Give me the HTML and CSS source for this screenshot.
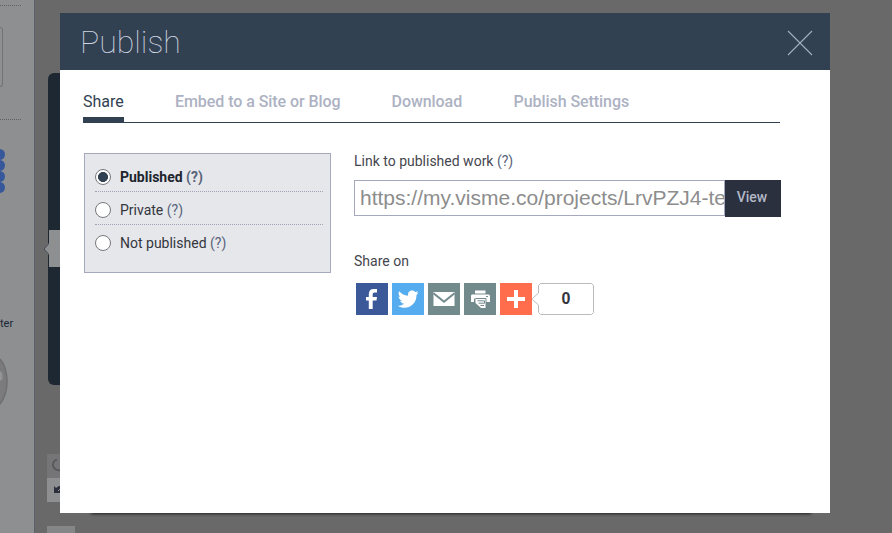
FILE: index.html
```html
<!DOCTYPE html>
<html lang="en">
<head>
<meta charset="utf-8">
<title>Publish</title>
<link rel="stylesheet" href="styles.css">
</head>
<body>
<div class="editor">
  <aside class="sidebar">
    <div class="side-rule"></div>
    <div class="side-card"></div>
    <div class="side-rule"></div>
    <div class="dots"><i></i><i></i><i></i><i></i></div>
    <span class="side-label">ter</span>
    <svg class="knob" width="10" height="50" viewBox="0 0 10 50"><path d="M0 2Q7 10 7 25Q7 38 0 47Z" fill="#7b7b7e"/><path d="M0 14Q3 15 2.500 22L0 24Z" fill="#939497"/><path d="M0 2Q7 10 7 25Q7 38 0 47" fill="none" stroke="#6f6f73" stroke-width="1.500"/></svg>
  </aside>
  <main class="canvas">
    <div class="slide"></div>
    <div class="handle"></div>
    <svg class="arrow" width="6" height="12" viewBox="0 0 6 12"><path d="M6 0L1 6L6 12Z" fill="#8e8f91"/><path d="M6 .5L1 6L6 11.500" fill="none" stroke="#454b56"/></svg>
    <div class="tools">
      <div class="tool dim"><svg width="13" height="24" viewBox="0 0 13 24"><path d="M10 5.500A5.300 5.300 0 0 0 13 16" fill="none" stroke="#56575c" stroke-width="1.800"/></svg></div>
      <div class="tool"><svg width="13" height="24" viewBox="0 0 13 24"><path d="M7 8L9 10L12 8H13V15H7Z" fill="#2b303c"/><path d="M11 13L13 11" stroke="#8e8f91"/></svg></div>
    </div>
    <div class="bottom-tool"></div>
    <div class="shade"></div>
  </main>
</div>

<section class="modal">
  <header class="head">
    <h1>Publish</h1>
    <svg class="close" width="26" height="26" viewBox="0 0 26 26"><path d="M1 1L25 25M25 1L1 25" stroke="#a3adc3" stroke-width="1.100"/></svg>
  </header>
  <nav class="tabs">
    <a class="tab active">Share</a>
    <a class="tab embed">Embed to a Site or Blog</a>
    <a class="tab download">Download</a>
    <a class="tab">Publish Settings</a>
  </nav>
  <div class="content">
    <div class="status">
      <label class="option chosen"><span class="radio on"></span><span>Published <em>(?)</em></span></label>
      <label class="option"><span class="radio"></span><span>Private <em>(?)</em></span></label>
      <label class="option"><span class="radio"></span><span>Not published <em>(?)</em></span></label>
    </div>
    <div class="share">
      <div class="caption">Link to published work <em>(?)</em></div>
      <div class="link">
        <div class="url">https://my.visme.co/projects/LrvPZJ4-te</div>
        <div class="view">View</div>
      </div>
      <div class="caption">Share on</div>
      <div class="icons">
        <svg class="fb" viewBox="0 0 32 32"><path d="M12.800 26V17.500H10V14H12.800V11.500C12.800 7.800 14.600 6 17.500 6H21V9.500H18.700C17.200 9.500 16.700 10.200 16.700 11.500V14H21L20.500 17.500H16.700V26Z" fill="#fff"/></svg>
        <svg class="tw" viewBox="0 0 32 32"><path d="M26.500 9.600C25.700 10 24.900 10.200 24 10.300C24.900 9.800 25.600 8.900 25.900 7.900C25 8.400 24.100 8.800 23.200 9C20.400 6 15.300 8.100 16.100 12.700C12.500 12.500 9.400 10.900 7.200 8.200C6 10.300 6.700 12.600 8.500 13.900C7.800 13.800 7.200 13.600 6.600 13.300C6.600 15.500 8 17.200 10.100 17.700C9.500 17.900 8.900 17.900 8.200 17.800C8.800 19.500 10.400 20.600 12.100 20.700C10.300 22.100 8.100 22.900 5.700 22.700C14.200 28 24.500 22.200 24.500 12.400V11.900C25.300 11.300 26 10.500 26.500 9.600Z" fill="#fff"/></svg>
        <svg class="gray" viewBox="0 0 32 32"><rect x="5.500" y="9" width="21" height="14" fill="#fff"/><path d="M5.500 10.200L16 18.700L26.500 10.200" fill="none" stroke="#738a8d" stroke-width="2"/></svg>
        <svg class="gray" viewBox="0 0 32 32"><path d="M11 7.500H21.500V10.500H11ZM8 11.500H24.500Q26 11.500 26 13V19H22.500V15.500H10V19H7V13Q7 11.500 8 11.500Z" fill="#fff"/><path d="M11.500 15H21.500V25H17L11.500 20Z" fill="#fff"/><path d="M11.500 15.500H22M13.500 17.800H20.500V20.200H14.500M16.500 22.500H20" fill="none" stroke="#738a8d"/><path d="M22 13.500H24" stroke="#738a8d"/></svg>
        <svg class="plus" viewBox="0 0 32 32"><path d="M14 7H18V14H25V18H18V25H14V18H7V14H14Z" fill="#fff"/></svg>
        <div class="count"><svg width="63" height="32" viewBox="0 0 63 32"><path d="M9.500 .5H60.500L62.500 2.500V29.500L60.500 31.500H9.500L7.500 29.500V22L1.500 16.500V15.500L7.500 10V2.500Z" fill="#fff" stroke="#bbb"/></svg><span>0</span></div>
      </div>
    </div>
  </div>
</section>
</body>
</html>
```
FILE: styles.css
```css
* { box-sizing: border-box; }
body { margin: 0; width: 892px; height: 533px; overflow: hidden; background: #696969; font-family: Roboto, sans-serif; }
em { font-style: normal; color: #58647a; }
.editor { display: flex; height: 533px; }
.sidebar { width: 35px; background: #8e8f91; border-right: 1px solid #5c606a; padding-top: 5px; overflow: hidden; }
.side-rule { width: 21px; border-top: 1px dotted #606166; }
.side-card { width: 3px; height: 60px; margin: 21px 0 32px; border: 1px solid #737478; border-left: 0; border-radius: 0 4px 4px 0; }
.dots { margin-top: 29px; display: flex; flex-direction: column; }
.dots i { width: 11px; height: 11px; margin: 0 0 0 -6px; border-radius: 50%; background: #36589b; box-shadow: -2px 0 #36589b; }
.side-label { display: block; margin-top: 124px; font-size: 11px; line-height: 14px; color: #192737; }
.knob { display: block; margin-top: 26px; }
.canvas { position: relative; flex: 1; }
.slide { position: absolute; left: 13px; top: 73px; width: 760px; height: 312px; border-radius: 6px; background: #1e2832; }
.handle { position: absolute; left: 14px; top: 230px; width: 15px; height: 37px; background: #8e8f91; }
.arrow { position: absolute; left: 8px; top: 243px; }
.tools { position: absolute; left: 12px; top: 454px; width: 13px; }
.tool { height: 24px; background: #8e8f91; }
.tool.dim { background: #757577; }
.tool svg { display: block; }
.bottom-tool { position: absolute; left: 12px; top: 526px; width: 28px; height: 7px; background: #858688; }
.shade { position: absolute; left: 56px; top: 490px; width: 720px; height: 23px; box-shadow: 0 1px 3px #202422; }
.modal { position: absolute; left: 60px; top: 13px; width: 770px; height: 500px; background: #fff; }
.head { display: flex; justify-content: space-between; height: 57px; padding: 17px 17px 0 20px; background: #324151; }
h1 { margin: -6px 0 0; font-size: 32px; line-height: 36px; font-weight: 100; color: #d0d6e3; }
.close { display: block; }
.tabs { display: flex; width: 697px; height: 53px; margin-left: 23px; border-bottom: 1px solid #324151; }
.tab { height: 53px; padding-top: 22px; font-size: 16px; line-height: 20px; font-weight: 500; letter-spacing: -.06px; color: #adb2c3; white-space: nowrap; }
.tab.active { width: 41px; margin-right: 51px; font-weight: 400; letter-spacing: 0; color: #324151; border-bottom: 6px solid #324151; }
.embed { width: 166px; margin-right: 50.5px; }
.download { width: 71px; margin-right: 51px; }
.content { display: flex; padding: 30px 0 0 24px; }
.status { width: 247px; height: 120px; padding: 7px 7px 0 10px; border: 1px solid #a5a9be; background: #e6e7eb; }
.option { display: flex; align-items: center; height: 33px; padding-top: 2px; font-size: 14px; color: #33363d; }
.option:first-child { height: 31px; }
.option:not(:last-child) { border-bottom: 1px dotted #a0a3b6; }
.option:nth-child(2) { padding-top: 4px; }
.chosen { font-weight: 700; color: #20242d; }
.radio { width: 16px; height: 16px; margin-right: 9px; border: 1px solid #77787c; border-radius: 50%; background: #fff; }
.radio.on { background: radial-gradient(circle, #324151 4.700px, #fff 5.300px); }
.share { margin-left: 23px; width: 427px; }
.caption { font-size: 14px; line-height: 16px; color: #44464e; }
.link { display: flex; height: 37px; margin: 11px 0 36px; }
.url { width: 371px; height: 36px; padding-left: 5px; border: 1px solid #a5a9be; overflow: hidden; white-space: nowrap; font: 21px/34px "Liberation Sans", sans-serif; color: #8d8d8d; }
.view { width: 56px; height: 37px; padding-right: 2px; background: #2a303e; color: #b3b8c7; font-size: 14px; line-height: 35px; font-weight: 500; text-align: center; }
.icons { display: flex; gap: 4px; margin: 14px 0 0 2px; height: 32px; }
.icons > svg { width: 32px; height: 32px; }
.fb { background: #3b5998; }
.tw { background: #55acee; }
.gray { background: #738a8d; }
.plus { background: #ff6d4c; }
.count { display: grid; width: 63px; margin-left: -5px; }
.count svg, .count span { grid-area: 1 / 1; }
.count span { padding-left: 7px; text-align: center; font: 700 16px/32px "Liberation Sans", sans-serif; color: #33343c; }
```
